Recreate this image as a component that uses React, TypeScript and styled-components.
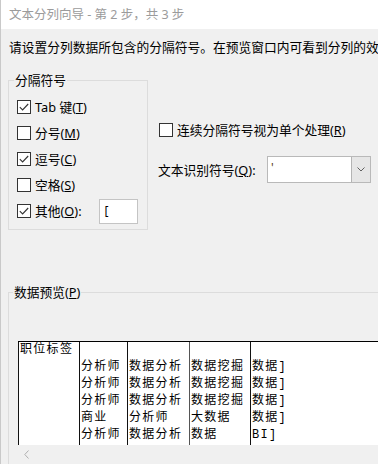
import styled, { createGlobalStyle } from "styled-components";

const GlobalStyle = createGlobalStyle`
  html, body { margin: 0; padding: 0; background: #f0f0f0; }
  body { font-family: "Noto Sans", "Noto Sans CJK SC", sans-serif; }
`;

const Window = styled.div`
  width: 378px;
  height: 464px;
  overflow: hidden;
  box-sizing: border-box;
  border-left: 1px solid #c9c9c9;
  background: #f0f0f0;
  color: #000;
  font-family: "Noto Sans", "Noto Sans CJK SC", sans-serif;
  font-size: 12.75px;
`;

const TitleBar = styled.div`
  height: 29px;
  line-height: 29px;
  background: #fff;
  padding-left: 8px;
  color: #9b9b9b;
  font-size: 12.5px;
  white-space: nowrap;
`;

const Content = styled.div`
  padding-left: 7px;
`;

const Instruction = styled.div`
  margin: 9px 0 0 1px;
  line-height: 18px;
  white-space: nowrap;
`;

const OptionsRow = styled.div`
  display: flex;
  align-items: flex-start;
  gap: 10px;
  margin-top: 16px;
`;

const GroupBox = styled.fieldset<{ $wide?: boolean }>`
  margin: 0;
  padding: 0;
  min-width: 0;
  box-sizing: border-box;
  border: 1px solid #dcdcdc;
  width: ${({ $wide }) => ($wide ? "420px" : "140px")};
  ${({ $wide }) => ($wide ? "height: 200px;" : "")}
`;

const Legend = styled.legend<{ $offset: number }>`
  padding: 0 1px;
  margin-left: ${({ $offset }) => $offset}px;
  line-height: 16px;
  font-size: 12.75px;
`;

const CheckList = styled.div`
  display: flex;
  flex-direction: column;
  padding: 6px 9px 5px 8px;
`;

const CheckRow = styled.div<{ $h?: number }>`
  display: flex;
  align-items: center;
  gap: 4px;
  height: ${({ $h }) => $h ?? 26}px;
  white-space: nowrap;
`;

const Box = styled.span`
  flex: none;
  width: 14px;
  height: 14px;
  box-sizing: border-box;
  border: 1px solid #333;
  background: #fff;
  display: flex;
  align-items: center;
  justify-content: center;
`;

const Label = styled.span`
  line-height: 16px;
`;

const OtherInput = styled.div`
  margin-left: 13px;
  width: 41px;
  height: 25px;
  box-sizing: border-box;
  border: 1px solid #c4c4c4;
  background: #fff;
  padding-left: 5px;
  line-height: 22px;
  font-size: 12px;
`;

const RightCol = styled.div`
  display: flex;
  flex-direction: column;
  margin-top: 50px;
`;

const RightCheck = styled(CheckRow)`
  margin-left: 1px;
`;

const ComboRow = styled.div`
  display: flex;
  align-items: center;
  margin-top: 18px;
  height: 27px;
`;

const ComboLabel = styled.span`
  width: 109px;
  line-height: 16px;
  white-space: nowrap;
`;

const Combo = styled.div`
  display: flex;
  width: 104px;
  height: 27px;
  box-sizing: border-box;
  border: 1px solid #b9b9b9;
  background: #fff;
`;

const ComboValue = styled.div`
  flex: 1;
  padding-left: 3px;
  line-height: 22px;
  font-size: 12px;
  color: #5a3a10;
`;

const ComboButton = styled.div`
  width: 18px;
  background: #e6e6e6;
  border-left: 1px solid #b4b4b4;
  display: flex;
  align-items: center;
  justify-content: center;
`;

const Preview = styled(GroupBox)`
  margin-top: 54px;
`;

const PreviewInner = styled.div`
  padding: 41px 0 0 9px;
`;

const Table = styled.div`
  display: grid;
  grid-template-columns: 61px 48px 62px 61px 220px;
  height: 104px;
  box-sizing: border-box;
  border-top: 1px solid #000;
  background: #fff;
`;

const Col = styled.div<{ $line?: string }>`
  border-left: 1px solid ${({ $line }) => $line ?? "#111"};
  padding-left: 1px;
  font-family: "Liberation Mono", "Noto Sans CJK SC", monospace;
  font-size: 12px;
  letter-spacing: 1.3px;
  line-height: 17px;
  white-space: pre;
  overflow: hidden;
`;

const Line = styled.div`
  height: 17px;
`;

const ScrollBar = styled.div`
  height: 18px;
  display: flex;
  align-items: center;
  padding-left: 6px;
`;

const Acc = ({ k }: { k: string }) => (
  <>
    (<u>{k}</u>)
  </>
);

function Check({ on }: { on?: boolean }) {
  return (
    <Box>
      {on && (
        <svg width="12" height="12" viewBox="0 0 12 12">
          <polyline points="1.8,6.2 4.6,9 10.2,3" fill="none" stroke="#333" strokeWidth="1.1" />
        </svg>
      )}
    </Box>
  );
}

const columns: { lines: string[]; line?: string }[] = [
  { lines: ["职位标签", "", "", "", "", ""] },
  { lines: ["", "分析师", "分析师", "分析师", "商业", "分析师"] },
  { lines: ["", "数据分析", "数据分析", "数据分析", "分析师", "数据分析"] },
  { lines: ["", "数据挖掘", "数据挖掘", "数据挖掘", "大数据", "数据"], line: "#555" },
  { lines: ["", "数据]", "数据]", "数据]", "数据]", "BI]"] },
];

export default function App() {
  return (
    <>
      <GlobalStyle />
      <Window>
        <TitleBar>文本分列向导 - 第 2 步，共 3 步</TitleBar>
        <Content>
          <Instruction>请设置分列数据所包含的分隔符号。在预览窗口内可看到分列的效果。</Instruction>
          <OptionsRow>
            <GroupBox>
              <Legend $offset={5}>分隔符号</Legend>
              <CheckList>
                <CheckRow>
                  <Check on />
                  <Label>
                    Tab 键<Acc k="T" />
                  </Label>
                </CheckRow>
                <CheckRow>
                  <Check />
                  <Label>
                    分号<Acc k="M" />
                  </Label>
                </CheckRow>
                <CheckRow>
                  <Check on />
                  <Label>
                    逗号<Acc k="C" />
                  </Label>
                </CheckRow>
                <CheckRow>
                  <Check />
                  <Label>
                    空格<Acc k="S" />
                  </Label>
                </CheckRow>
                <CheckRow>
                  <Check on />
                  <Label>
                    其他<Acc k="O" />:
                  </Label>
                  <OtherInput>[</OtherInput>
                </CheckRow>
              </CheckList>
            </GroupBox>
            <RightCol>
              <RightCheck $h={16}>
                <Check />
                <Label>
                  连续分隔符号视为单个处理<Acc k="R" />
                </Label>
              </RightCheck>
              <ComboRow>
                <ComboLabel>
                  文本识别符号<Acc k="Q" />:
                </ComboLabel>
                <Combo>
                  <ComboValue>'</ComboValue>
                  <ComboButton>
                    <svg width="8" height="5" viewBox="0 0 8 5">
                      <polyline points="0.5,0.5 4,4 7.5,0.5" fill="none" stroke="#606060" strokeWidth="1" />
                    </svg>
                  </ComboButton>
                </Combo>
              </ComboRow>
            </RightCol>
          </OptionsRow>
          <Preview $wide>
            <Legend $offset={4}>
              数据预览<Acc k="P" />
            </Legend>
            <PreviewInner>
              <Table>
                {columns.map((c, i) => (
                  <Col key={i} $line={c.line}>
                    {c.lines.map((l, j) => (
                      <Line key={j}>{l}</Line>
                    ))}
                  </Col>
                ))}
              </Table>
              <ScrollBar>
                <svg width="5" height="9" viewBox="0 0 5 9">
                  <polyline points="4.5,0.5 0.8,4.5 4.5,8.5" fill="none" stroke="#b0b0b0" strokeWidth="1" />
                </svg>
              </ScrollBar>
            </PreviewInner>
          </Preview>
        </Content>
      </Window>
    </>
  );
}
